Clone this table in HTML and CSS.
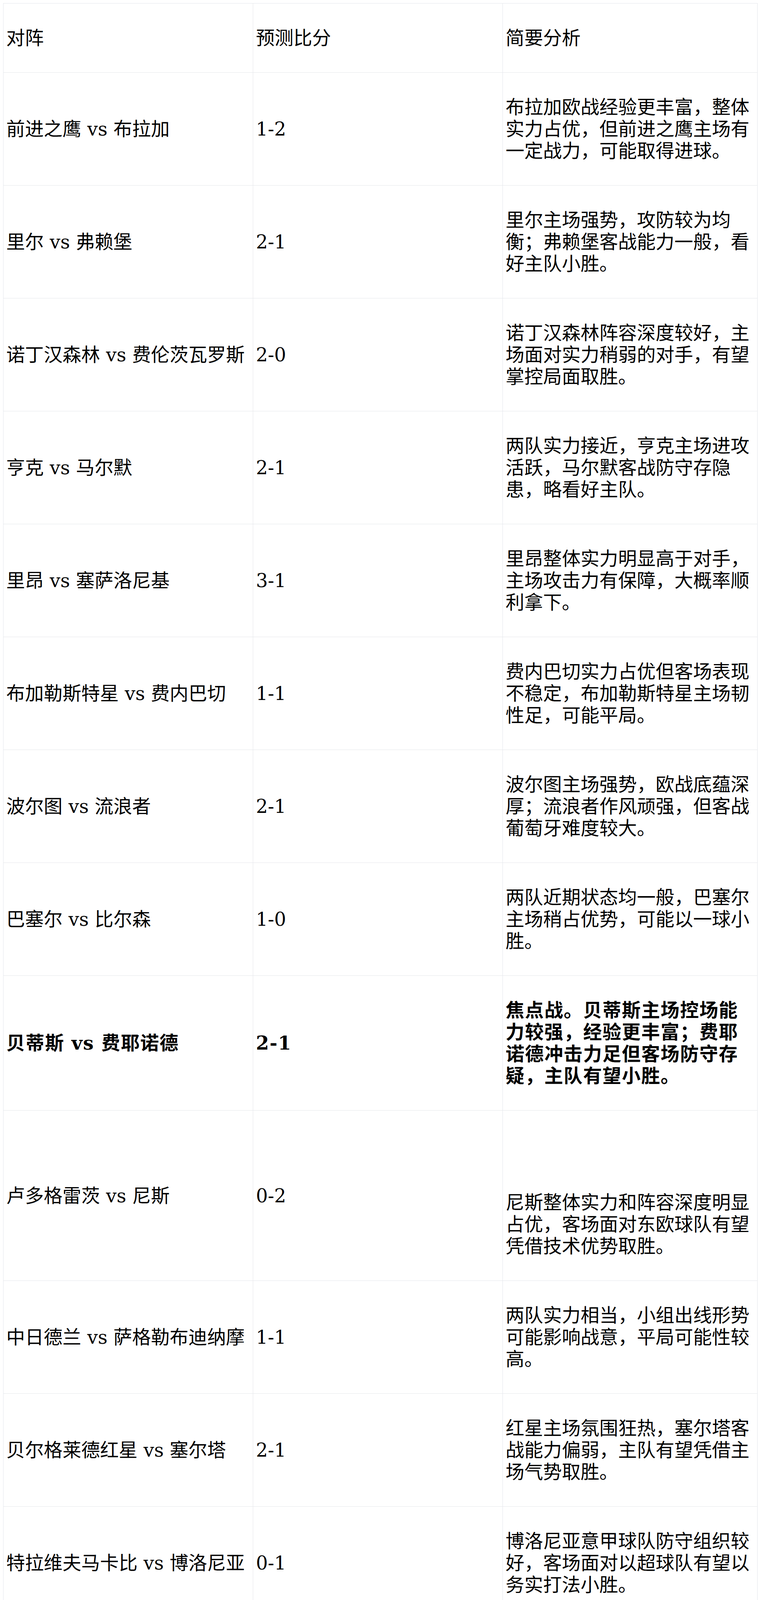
FILE: index.html
```html
<!DOCTYPE html>
<html lang="zh-CN">
<head>
<meta charset="utf-8">
<title>预测比分</title>
<link rel="stylesheet" href="styles.css">
</head>
<body>
<table class="predictions">
  <colgroup><col class="c1"><col class="c2"><col class="c3"></colgroup>
  <thead>
    <tr><th>对阵</th><th>预测比分</th><th>简要分析</th></tr>
  </thead>
  <tbody>
    <tr><td>前进之鹰 vs 布拉加</td><td>1-2</td><td>布拉加欧战经验更丰富，整体实力占优，但前进之鹰主场有一定战力，可能取得进球。</td></tr>
    <tr><td>里尔 vs 弗赖堡</td><td>2-1</td><td>里尔主场强势，攻防较为均衡；弗赖堡客战能力一般，看好主队小胜。</td></tr>
    <tr><td>诺丁汉森林 vs 费伦茨瓦罗斯</td><td>2-0</td><td>诺丁汉森林阵容深度较好，主场面对实力稍弱的对手，有望掌控局面取胜。</td></tr>
    <tr><td>亨克 vs 马尔默</td><td>2-1</td><td>两队实力接近，亨克主场进攻活跃，马尔默客战防守存隐患，略看好主队。</td></tr>
    <tr><td>里昂 vs 塞萨洛尼基</td><td>3-1</td><td>里昂整体实力明显高于对手，主场攻击力有保障，大概率顺利拿下。</td></tr>
    <tr><td>布加勒斯特星 vs 费内巴切</td><td>1-1</td><td>费内巴切实力占优但客场表现不稳定，布加勒斯特星主场韧性足，可能平局。</td></tr>
    <tr><td>波尔图 vs 流浪者</td><td>2-1</td><td>波尔图主场强势，欧战底蕴深厚；流浪者作风顽强，但客战葡萄牙难度较大。</td></tr>
    <tr><td>巴塞尔 vs 比尔森</td><td>1-0</td><td>两队近期状态均一般，巴塞尔主场稍占优势，可能以一球小胜。</td></tr>
    <tr class="focus"><td>贝蒂斯 vs 费耶诺德</td><td>2-1</td><td>焦点战。贝蒂斯主场控场能力较强，经验更丰富；费耶诺德冲击力足但客场防守存疑，主队有望小胜。</td></tr>
    <tr><td>卢多格雷茨 vs 尼斯</td><td>0-2</td><td><div class="lead-gap"></div>尼斯整体实力和阵容深度明显占优，客场面对东欧球队有望凭借技术优势取胜。</td></tr>
    <tr><td>中日德兰 vs 萨格勒布迪纳摩</td><td>1-1</td><td>两队实力相当，小组出线形势可能影响战意，平局可能性较高。</td></tr>
    <tr><td>贝尔格莱德红星 vs 塞尔塔</td><td>2-1</td><td>红星主场氛围狂热，塞尔塔客战能力偏弱，主队有望凭借主场气势取胜。</td></tr>
    <tr><td>特拉维夫马卡比 vs 博洛尼亚</td><td>0-1</td><td>博洛尼亚意甲球队防守组织较好，客场面对以超球队有望以务实打法小胜。</td></tr>
    <tr><td>凯尔特人 vs 乌德勒支</td><td>3-1</td><td>凯尔特人主场攻击力强悍，荷甲中游球队乌德勒支难以抵挡其主场攻势。</td></tr>
    <tr><td>斯图加特 vs 年轻人</td><td>2-0</td><td>斯图加特德甲劲旅，整体实力和身体对抗占优，主场取胜问题不大。</td></tr>
    <tr><td>格拉茨风暴 vs 布兰</td><td>1-0</td><td>两队实力接近，奥甲球队主场稍有优势，可能以一球小胜。</td></tr>
    <tr><td>帕纳辛纳科斯 vs 罗马</td><td>1-2</td><td>罗马实力与经验均占优，希腊客场不易但穆里尼奥（或继任者）球队应能拿下关键战。</td></tr>
    <tr><td>阿斯顿维拉 vs 萨尔茨堡红牛</td><td>2-0</td><td>维拉英超球队实力占优，主场强势；萨尔茨堡欧战虽有经验，但客场挑战英超强队难度大。</td></tr>
  </tbody>
</table>
</body>
</html>
```
FILE: styles.css
```css
html, body {
  background: #ffffff;
}
body {
  margin: 8px 1px 8px 8px;
  font-family: "DejaVu Serif", "Noto Sans CJK SC", serif;
  font-size: 48px;
  line-height: 56px;
  color: #000000;
}
.predictions {
  width: 100%;
  table-layout: fixed;
  border-collapse: collapse;
}
.predictions .c1,
.predictions .c2 {
  width: 639px;
}
.predictions th,
.predictions td {
  border: 1px solid #e5e7eb;
  padding: 60px 7px;
  text-align: left;
  vertical-align: middle;
  font-weight: normal;
}
.predictions .focus td {
  font-weight: bold;
  letter-spacing: 1.6px;
}
.lead-gap {
  height: 147px;
}
```
